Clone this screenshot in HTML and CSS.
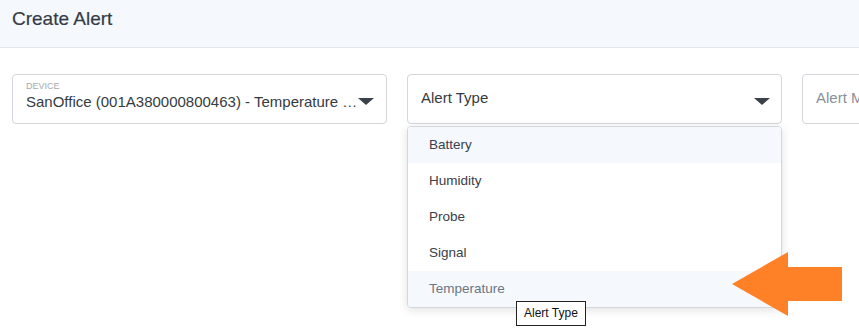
FILE: index.html
```html
<!DOCTYPE html>
<html>
  <head>
    <title>Create Alert</title>
    <link rel="stylesheet" href="styles.css">
  </head>
  <body>
    <div class="header">
      <p class="title">Create Alert</p>
    </div>

    <div class="content">
      <div class="field">
        <p class="field-label">DEVICE</p>
        <p class="field-value">SanOffice (001A380000800463) - Temperature Sensor</p>
        <span class="caret"></span>
      </div>

      <div class="field field-select">
        <p class="field-value">Alert Type</p>
        <span class="caret"></span>

        <div class="dropdown">
          <div class="option option-active">Battery</div>
          <div class="option">Humidity</div>
          <div class="option">Probe</div>
          <div class="option">Signal</div>
          <div class="option option-hover">Temperature</div>
        </div>

        <div class="tooltip">Alert Type</div>
      </div>

      <div class="field field-select">
        <p class="field-value field-placeholder">Alert Message</p>
      </div>
    </div>

    <svg class="pointer" width="112" height="66" viewBox="0 0 112 66">
      <polygon points="0,32 56,0 56,15 110,15 110,49 56,49 56,64" fill="#fe8128"></polygon>
    </svg>
  </body>
</html>
```

FILE: styles.css
```css
html {
  overflow: hidden;
}

body {
  margin: 0;
  min-height: 334px;
  font-family: "Liberation Sans", Arial, sans-serif;
  color: #3b4148;
  background-color: white;
}

p {
  margin: 0;
}

.header {
  height: 47px;
  padding: 0 12px;
  background-color: #f5f9fe;
  border-bottom: 1px solid #e2e6ea;
  display: flex;
  align-items: center;
}

.title {
  font-size: 19px;
  color: #353c44;
  margin-top: -10px;
  -webkit-text-stroke: 0.2px #353c44;
}

.content {
  display: flex;
  gap: 20px;
  padding: 26px 12px;
}

.field {
  position: relative;
  flex: 0 0 375px;
  min-width: 0;
  height: 50px;
  box-sizing: border-box;
  border: 1px solid #d3d6da;
  border-radius: 4px;
  padding: 6px 26px 0 13px;
}

.field-label {
  font-size: 9px;
  color: #a4a9ae;
  line-height: 11px;
}

.field-value {
  font-size: 15px;
  line-height: 20px;
  color: #353b42;
  white-space: nowrap;
  overflow: hidden;
  text-overflow: ellipsis;
}

.field-select {
  display: flex;
  align-items: center;
  padding-top: 0;
  padding-bottom: 2px;
}

.field-placeholder {
  color: #8a9098;
}

.caret {
  position: absolute;
  right: 12px;
  top: 23px;
  width: 0;
  height: 0;
  border-left: 8px solid transparent;
  border-right: 8px solid transparent;
  border-top: 7px solid #3b4148;
}

.field-select .caret {
  right: 11px;
}

.dropdown {
  position: absolute;
  top: 51px;
  left: -1px;
  right: -1px;
  background-color: white;
  border: 1px solid #d3d7dc;
  border-radius: 4px;
  box-shadow: 0 2px 10px rgba(0, 0, 0, 0.12);
  overflow: hidden;
  z-index: 2;
}

.option {
  height: 36px;
  line-height: 36px;
  padding-left: 21px;
  font-size: 13.5px;
  color: #3a4048;
}

.option-active {
  background-color: #f5f9fe;
}

.option-hover {
  background-color: #f5f9fe;
  color: #6b7683;
}

.tooltip {
  position: absolute;
  top: 226px;
  left: 108px;
  padding: 4px 7px 5px 7px;
  background-color: white;
  border: 1px solid #222;
  font-size: 12px;
  color: #111;
  z-index: 3;
}

.pointer {
  position: absolute;
  left: 732px;
  top: 252px;
  z-index: 4;
}
```
